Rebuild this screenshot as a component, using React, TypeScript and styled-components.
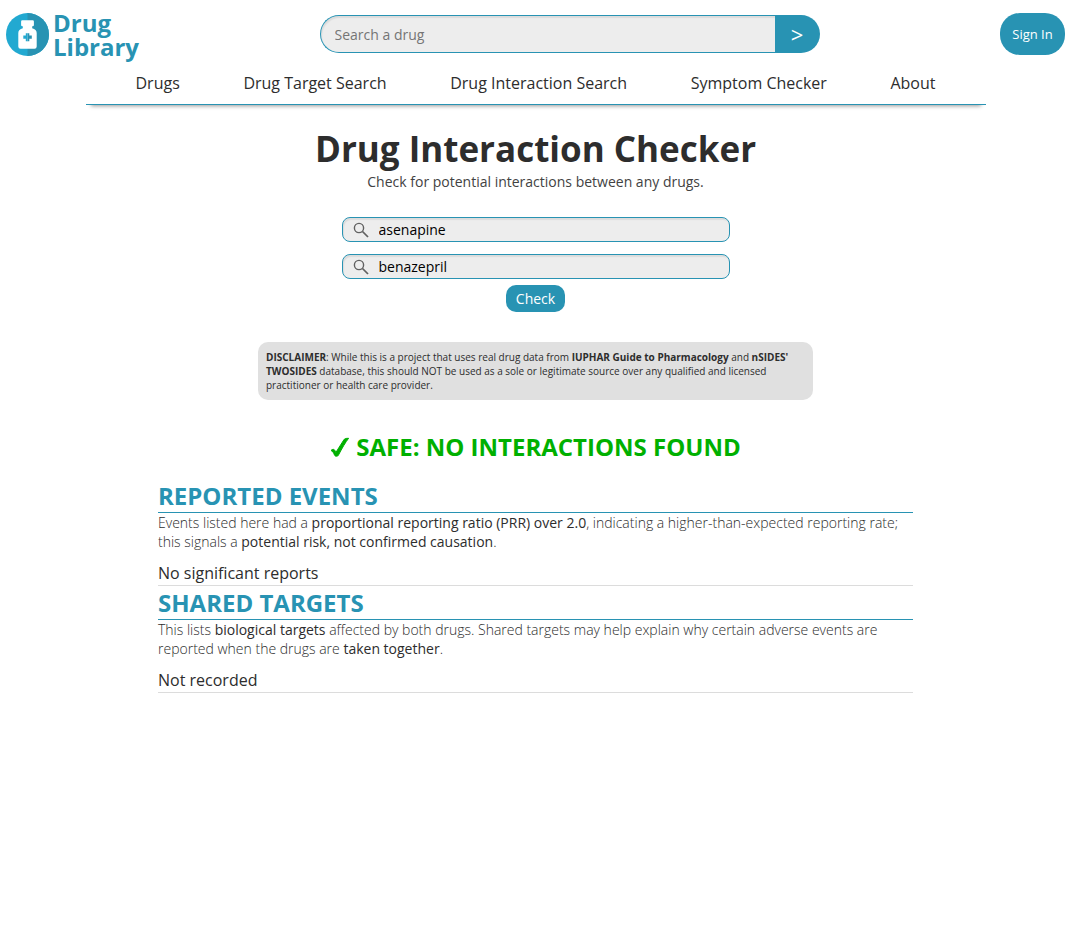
import React from "react";
import styled, { createGlobalStyle } from "styled-components";

const blue = "#2893b3";
const ink = "#2d2d2d";

const GlobalStyle = createGlobalStyle`
  * { box-sizing: border-box; }
  body {
    margin: 0;
    background: #fff;
    color: ${ink};
    font-family: "Open Sans", sans-serif;
    font-size: 16px;
    line-height: 22px;
  }
  h1, h2, p { margin: 0; }
  a { color: inherit; text-decoration: none; }
  input, button { font-family: inherit; }
`;

const Header = styled.header`
  display: flex;
  justify-content: space-between;
  align-items: flex-start;
  height: 56px;
  padding: 13px 4px 0 6px;
`;

const Logo = styled.a`
  display: flex;
  align-items: flex-start;
  gap: 4px;
  && { color: ${blue}; }
  font-size: 24px;
  font-weight: 700;
  line-height: 24px;

  svg { display: block; }
`;

const LogoName = styled.span`
  display: flex;
  flex-direction: column;
  margin-top: -2px;
`;

const SearchForm = styled.form`
  display: flex;
  width: 500px;
  height: 38px;
  margin-top: 2px;
`;

const SearchInput = styled.input`
  flex: 1;
  min-width: 0;
  padding: 0 14px;
  border: 1px solid ${blue};
  border-right: 0;
  border-radius: 19px 0 0 19px;
  background: #ededed;
  box-shadow: inset 1px 2px 1px #dcdcdc;
  font-size: 14px;

  &::placeholder { color: #757575; }
`;

const SearchButton = styled.button`
  width: 45px;
  padding: 0;
  border: 0;
  border-radius: 0 19px 19px 0;
  background: ${blue};
  color: #fff;
  font-size: 22px;
  line-height: 30px;
`;

const SignIn = styled.button`
  width: 65px;
  height: 42px;
  padding: 0;
  border: 0;
  border-radius: 20px;
  background: ${blue};
  color: #fff;
  font-size: 13px;
`;

const Nav = styled.nav`
  display: flex;
  justify-content: space-between;
  max-width: 900px;
  margin: 16px auto 0;
  padding: 0 50px 10px;
  border-bottom: 1px solid ${blue};
  box-shadow: 0 6px 4px -5px #999;
  font-weight: 500;
`;

const Content = styled.div`
  padding-left: 2px;
`;

const Main = styled.main`
  display: flex;
  flex-direction: column;
  align-items: center;
  padding-top: 21px;
`;

const Title = styled.h1`
  font-size: 35px;
  line-height: 46px;
`;

const Subtitle = styled.p`
  color: #424242;
  font-size: 14px;
  line-height: 19px;
`;

const CheckForm = styled.form`
  display: flex;
  flex-direction: column;
  align-items: center;
  width: 388px;
  margin-top: 26px;
`;

const DrugField = styled.label`
  display: flex;
  align-items: center;
  gap: 10px;
  width: 100%;
  height: 25px;
  padding: 0 10px;
  margin-bottom: 12px;
  border: 1px solid ${blue};
  border-radius: 8px;
  background: #ededed;
  box-shadow: inset 1px 2px 1px #dcdcdc;

  &:last-of-type { margin-bottom: 6px; }
`;

const DrugInput = styled.input`
  flex: 1;
  min-width: 0;
  padding: 0;
  border: 0;
  outline: 0;
  background: transparent;
  color: #000;
  font-size: 14px;
  line-height: 19px;
`;

const CheckButton = styled.button`
  height: 27px;
  padding: 0 10px;
  border: 0;
  border-radius: 10px;
  background: ${blue};
  color: #fff;
  font-size: 14px;
`;

const Disclaimer = styled.p`
  max-width: 555px;
  margin-top: 30px;
  padding: 8px;
  border-radius: 10px;
  background: #e0e0e0;
  font-size: 10px;
  line-height: 14px;
`;

const Verdict = styled.h2`
  display: flex;
  align-items: center;
  gap: 6px;
  margin: 30px 0 16px;
  color: #00b000;
  font-size: 24px;
  line-height: 33px;
`;

const Results = styled.div`
  width: 100%;
  max-width: 755px;
`;

const Section = styled.section`
  border-bottom: 1px solid #dcdcdc;
`;

const SectionTitle = styled.h2`
  border-bottom: 1px solid ${blue};
  color: ${blue};
  font-size: 24px;
  line-height: 33px;
`;

const Explanation = styled.p`
  font-size: 14px;
  font-weight: 300;
  line-height: 19px;

  strong { font-weight: 400; }
`;

const Finding = styled.p`
  padding: 11px 0 1px;
`;

const LogoIcon = () => (
  <svg width="43" height="43" viewBox="0 0 43 43" aria-hidden="true">
    <circle cx="21.5" cy="21.5" r="21.5" fill="#22a9d1" />
    <path d="M21.5 0a21.5 21.5 0 0 1 0 43z" fill={blue} />
    <path
      d="M16.300 7.300h10.400q1.200 0 1.200 1.200v3.600q0 1.200-1.200 1.200h-.5v1.900c2.800.8 4.500 2.200 4.500 4.800v13.500q0 2.200-2.200 2.200H14.500q-2.200 0-2.200-2.200V20c0-2.600 1.700-4 4.500-4.800v-1.900h-.5q-1.200 0-1.200-1.200V8.500q0-1.200 1.200-1.200z"
      fill="#fff"
    />
    <path d="M21.500 20.200v8h-1.700v-2.500h-2.500v-3.300h2.500v-2.200z" fill="#22a9d1" />
    <path d="M21.500 20.200h1.800v2.200h2.500v3.300h-2.500v2.500h-1.800z" fill={blue} />
  </svg>
);

const SearchIcon = () => (
  <svg width="16" height="16" viewBox="0 0 16 16" fill="none" stroke="#616161" aria-hidden="true">
    <circle cx="6" cy="6" r="4.600" strokeWidth="1.400" />
    <path d="M9.500 9.500 15 15" strokeWidth="1.700" />
  </svg>
);

const CheckMark = () => (
  <svg
    width="20"
    height="20"
    viewBox="0 0 20 20"
    fill="currentColor"
    stroke="currentColor"
    strokeWidth="1"
    strokeLinejoin="round"
    aria-hidden="true"
  >
    <path d="M1 13.500C1.700 12.800 2.700 12.200 3.600 12.400c1 .2 1.500 1.300 2.300 3L13.800 2.900C14.700 1.600 15.600 1.300 18.600 1.300 15.500 5.200 12 11.300 8.600 17.800c-.5 1.100-1 1.400-2 1.400-1.200 0-1.700-.3-2.100-1.200C3.600 16 2.700 14 1 13.500z" />
  </svg>
);

const links = [
  "Drugs",
  "Drug Target Search",
  "Drug Interaction Search",
  "Symptom Checker",
  "About",
];

const keepPage = (event: React.FormEvent) => event.preventDefault();

export default function App() {
  return (
    <>
      <GlobalStyle />
      <Header>
        <Logo href="#">
          <LogoIcon />
          <LogoName>
            <span>Drug</span>
            <span>Library</span>
          </LogoName>
        </Logo>
        <SearchForm onSubmit={keepPage}>
          <SearchInput type="text" placeholder="Search a drug" aria-label="Search a drug" />
          <SearchButton type="submit" aria-label="Search">&gt;</SearchButton>
        </SearchForm>
        <SignIn type="button">Sign In</SignIn>
      </Header>
      <Content>
        <Nav>
          {links.map((name) => (
            <a href="#" key={name}>{name}</a>
          ))}
        </Nav>
        <Main>
          <Title>Drug Interaction Checker</Title>
          <Subtitle>Check for potential interactions between any drugs.</Subtitle>
          <CheckForm onSubmit={keepPage}>
            <DrugField>
              <SearchIcon />
              <DrugInput type="text" defaultValue="asenapine" aria-label="First drug" />
            </DrugField>
            <DrugField>
              <SearchIcon />
              <DrugInput type="text" defaultValue="benazepril" aria-label="Second drug" />
            </DrugField>
            <CheckButton type="submit">Check</CheckButton>
          </CheckForm>
          <Disclaimer>
            <strong>DISCLAIMER</strong>: While this is a project that uses real drug data from{" "}
            <strong>IUPHAR Guide to Pharmacology</strong> and <strong>nSIDES' TWOSIDES</strong>{" "}
            database, this should NOT be used as a sole or legitimate source over any qualified
            and licensed practitioner or health care provider.
          </Disclaimer>
          <Verdict>
            <CheckMark />
            SAFE: NO INTERACTIONS FOUND
          </Verdict>
          <Results>
            <Section>
              <SectionTitle>REPORTED EVENTS</SectionTitle>
              <Explanation>
                Events listed here had a{" "}
                <strong>proportional reporting ratio (PRR) over 2.0</strong>, indicating a
                higher-than-expected reporting rate; this signals a{" "}
                <strong>potential risk, not confirmed causation</strong>.
              </Explanation>
              <Finding>No significant reports</Finding>
            </Section>
            <Section>
              <SectionTitle>SHARED TARGETS</SectionTitle>
              <Explanation>
                This lists <strong>biological targets</strong> affected by both drugs. Shared
                targets may help explain why certain adverse events are reported when the drugs
                are <strong>taken together</strong>.
              </Explanation>
              <Finding>Not recorded</Finding>
            </Section>
          </Results>
        </Main>
      </Content>
    </>
  );
}
